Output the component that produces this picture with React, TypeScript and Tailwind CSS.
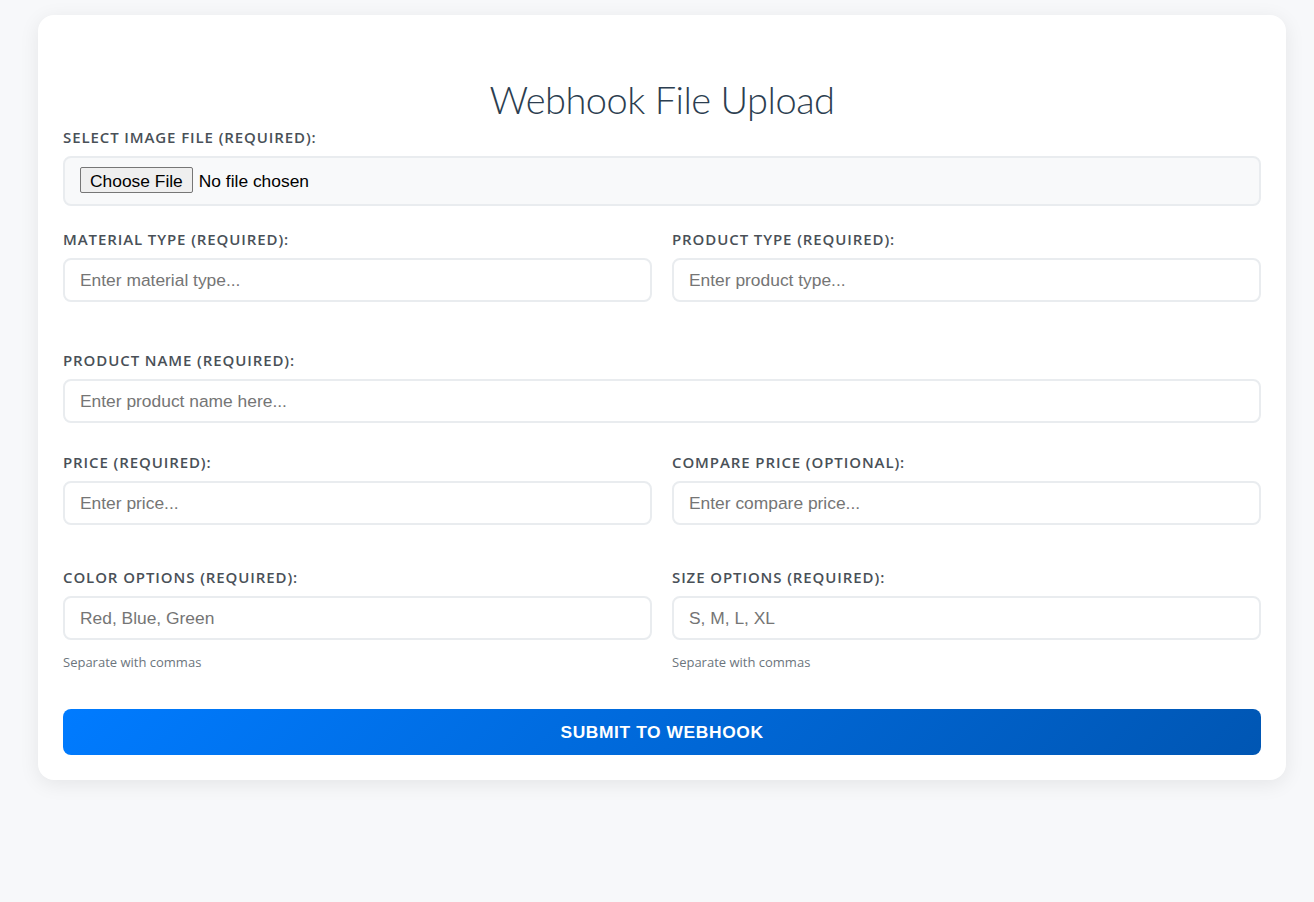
const labelCls =
  "mb-[10px] block text-[15px] font-semibold uppercase leading-[18px] tracking-[0.9px] text-[#495057] [font-family:'Open_Sans',sans-serif]";
const inputCls =
  "block h-[44px] w-full rounded-[8px] border-2 border-[#e9ecef] bg-white px-[15px] text-[17.4px] text-[#212529] placeholder:text-[#757575] outline-none [font-family:'Liberation_Sans',Arial,sans-serif]";
const hintCls =
  "mt-[14px] block text-[13px] leading-[16px] text-[#6c757d] [font-family:'Open_Sans',sans-serif]";

function Field({ label, placeholder }: { label: string; placeholder: string }) {
  return (
    <div>
      <label className={labelCls}>{label}</label>
      <input type="text" placeholder={placeholder} className={inputCls} />
    </div>
  );
}

export default function App() {
  return (
    <main className="min-h-[902px] bg-[#f7f8fa] pl-[38px] pt-[15px]">
      <form className="w-[1248px] rounded-[16px] bg-white px-[25px] pt-[25px] pb-[25px] shadow-[0_4px_20px_rgba(0,0,0,0.08)]">
        <h1 className="mt-[35px] mb-[5px] text-center text-[38px] font-light leading-[48px] tracking-[-0.5px] text-[#2c3e50] [font-family:Lato,sans-serif]">
          Webhook File Upload
        </h1>

        <div>
          <label className={labelCls}>Select Image File (Required):</label>
          <div className="flex h-[50px] items-center rounded-[8px] border-2 border-[#e9ecef] bg-[#f8f9fa] px-[15px]">
            <input
              type="file"
              className="text-[17.4px] text-black [font-family:'Liberation_Sans',Arial,sans-serif] file:mr-[6px] file:h-[26px] file:rounded-[2px] file:border file:border-[#767676] file:bg-[#efefef] file:px-[9px] file:text-[17.4px] file:text-black"
            />
          </div>
        </div>

        <div className="mt-[24px] grid grid-cols-2 gap-x-[20px]">
          <Field label="Material Type (Required):" placeholder="Enter material type..." />
          <Field label="Product Type (Required):" placeholder="Enter product type..." />
        </div>

        <div className="mt-[49px]">
          <Field label="Product Name (Required):" placeholder="Enter product name here..." />
        </div>

        <div className="mt-[30px] grid grid-cols-2 gap-x-[20px]">
          <Field label="Price (Required):" placeholder="Enter price..." />
          <Field label="Compare Price (Optional):" placeholder="Enter compare price..." />
        </div>

        <div className="mt-[43px] grid grid-cols-2 gap-x-[20px]">
          <div>
            <Field label="Color Options (Required):" placeholder="Red, Blue, Green" />
            <span className={hintCls}>Separate with commas</span>
          </div>
          <div>
            <Field label="Size Options (Required):" placeholder="S, M, L, XL" />
            <span className={hintCls}>Separate with commas</span>
          </div>
        </div>

        <button
          type="button"
          className="mt-[39px] block h-[46px] w-full rounded-[8px] bg-linear-[135deg] from-[#007bff] to-[#0056b3] text-[17.4px] font-bold uppercase tracking-[0.6px] text-white [font-family:'Liberation_Sans',Arial,sans-serif]"
        >
          Submit to Webhook
        </button>
      </form>
    </main>
  );
}
